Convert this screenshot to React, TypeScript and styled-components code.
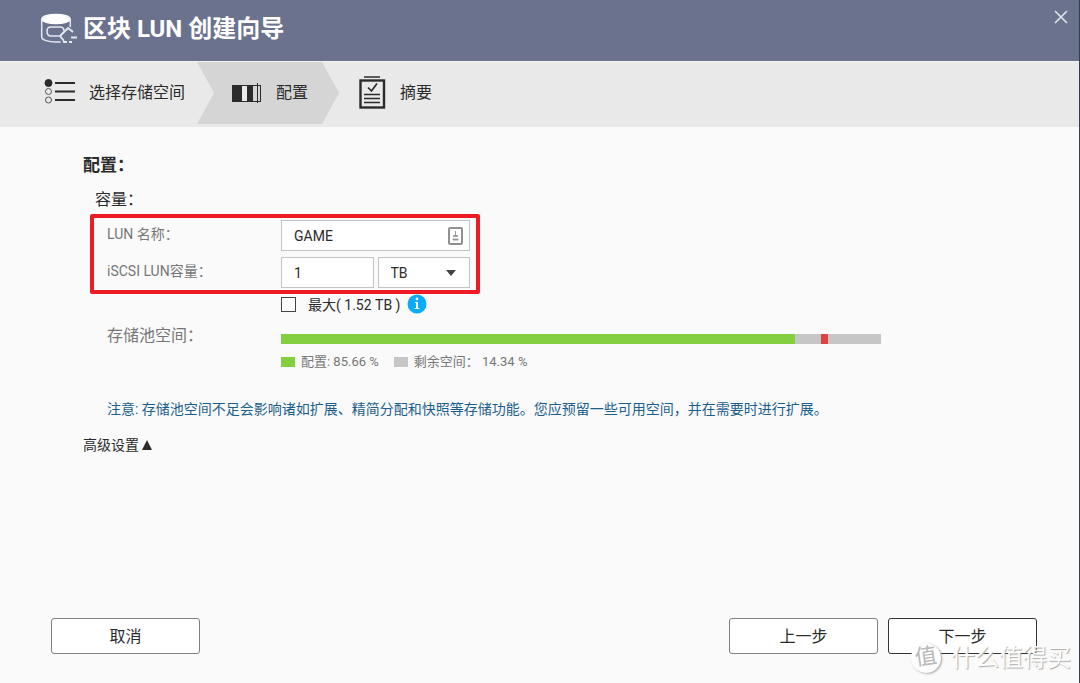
import React, { useState } from 'react';
import styled, { createGlobalStyle } from 'styled-components';

const GlobalStyle = createGlobalStyle`
  *, *::before, *::after { box-sizing: border-box; }
  body {
    margin: 0;
    background: #fafafa;
    color: #2b2b2b;
    font-family: Roboto, "Noto Sans CJK SC", sans-serif;
    font-size: 14px;
  }
  button, input, select { font: inherit; color: inherit; }
`;

const Wizard = styled.div`
  position: relative;
  display: flex;
  flex-direction: column;
  min-height: 100vh;
  border-right: 1px solid #33414f;
`;

const Header = styled.header`
  display: flex;
  align-items: flex-start;
  height: 62px;
  padding: 8px 9px 0 36px;
  background: #6b728e;
  border-bottom: 1px solid #f4f4f6;
  color: #fff;
`;

const Title = styled.h1`
  flex: 1;
  margin: 0;
  font-size: 24px;
  line-height: 42px;
  font-weight: 700;
`;

const CloseButton = styled.button`
  display: flex;
  padding: 2px;
  border: 0;
  background: none;
  cursor: pointer;
`;

const Steps = styled.ol`
  display: flex;
  margin: 0;
  padding: 0 0 3px;
  list-style: none;
  background: #e9e9e9;
`;

const Step = styled.li<{ $active?: boolean }>`
  display: flex;
  align-items: center;
  gap: 14px;
  height: 62px;
  padding: ${p => (p.$active ? '0 31px 0 35px' : '0 12px 0 20px')};
  font-size: 16px;
  line-height: 24px;
  ${p => p.$active && `
    background: #d5d5d5;
    clip-path: polygon(0 0, calc(100% - 17px) 0, 100% 50%, calc(100% - 17px) 100%, 0 100%, 17px 50%);
  `}
  &:first-child { padding-left: 44px; }
`;

const Content = styled.main`
  flex: 1;
  padding: 25px 83px;
`;

const Heading = styled.h2`
  margin: 0;
  font-size: 17px;
  line-height: 26px;
  font-weight: 700;
`;

const SubHeading = styled.h3`
  margin: 10px 0 0 12px;
  font-size: 16px;
  line-height: 24px;
  font-weight: 400;
`;

const Fields = styled.div`
  position: relative;
  display: grid;
  gap: 6px;
  width: 390px;
  margin: 2px 0 0 7px;
  padding: 6px 10px 6px 17px;
  &::after {
    content: '';
    position: absolute;
    inset: 0;
    border: 4px solid #ed1c24;
    border-radius: 2px;
    pointer-events: none;
  }
`;

const Row = styled.div`
  display: grid;
  grid-template-columns: 174px 1fr;
  align-items: start;
`;

const Label = styled.label`
  color: #777;
  line-height: 28px;
`;

const Controls = styled.div`
  display: flex;
  gap: 4px;
`;

const Box = styled.div`
  position: relative;
  flex: 1;
  min-width: 0;
  svg { position: absolute; pointer-events: none; }
`;

const TextInput = styled.input`
  display: block;
  width: 100%;
  height: 31px;
  padding: 0 12px;
  border: 1px solid #c4c4c4;
  border-radius: 0;
  background: #fff;
  outline: 0;
`;

const Select = styled.select`
  display: block;
  width: 100%;
  height: 31px;
  padding: 0 12px;
  border: 1px solid #c4c4c4;
  border-radius: 0;
  background: #fff;
  appearance: none;
  outline: 0;
`;

const CardIcon = styled.svg`
  top: 7px;
  right: 7px;
`;

const CaretIcon = styled.svg`
  top: 13px;
  right: 14px;
`;

const MaxRow = styled.div`
  display: flex;
  align-items: center;
  gap: 7px;
  height: 20px;
  margin-left: 198px;
`;

const CheckLabel = styled.label`
  display: flex;
  align-items: center;
  gap: 12px;
`;

const Checkbox = styled.input`
  width: 15px;
  height: 15px;
  margin: 0;
  border: 1px solid #444;
  background: #fff;
  appearance: none;
  &:checked { background: #444; box-shadow: inset 0 0 0 2px #fff; }
`;

const InfoButton = styled.button`
  display: flex;
  padding: 0;
  border: 0;
  background: none;
`;

const Pool = styled.div`
  display: grid;
  grid-template-columns: 174px minmax(0, 600px);
  margin: 10px 0 0 24px;
  color: #777;
`;

const PoolLabel = styled.div`
  font-size: 16px;
  line-height: 24px;
`;

const Bar = styled.div`
  position: relative;
  height: 10px;
  margin-top: 10px;
  background: #c6c6c6;
`;

const Used = styled.div`
  height: 100%;
  background: #83cf3f;
`;

const Threshold = styled.span`
  position: absolute;
  top: 0;
  left: 90%;
  width: 7px;
  height: 100%;
  background: #dc4444;
`;

const Legend = styled.div`
  display: flex;
  gap: 15px;
  margin-top: 8px;
  font-size: 13px;
  line-height: 20px;
`;

const LegendItem = styled.span<{ $color: string }>`
  display: flex;
  align-items: center;
  gap: 6px;
  white-space: pre;
  &::before {
    content: '';
    width: 14px;
    height: 10px;
    background: ${p => p.$color};
  }
`;

const Notice = styled.p`
  margin: 25px 0 0 24px;
  color: #1b5e8c;
  line-height: 24px;
`;

const AdvancedButton = styled.button`
  display: flex;
  align-items: center;
  gap: 2px;
  margin-top: 12px;
  padding: 0;
  border: 0;
  background: none;
  line-height: 24px;
`;

const Footer = styled.footer`
  display: flex;
  gap: 10px;
  padding: 0 42px 29px 51px;
`;

const Button = styled.button<{ $primary?: boolean }>`
  width: 149px;
  height: 36px;
  padding: 0 0 2px;
  border: 1px solid ${p => (p.$primary ? '#333' : '#808080')};
  border-radius: 3px;
  background: #fff;
  font-size: 16px;
  &:first-child { margin-right: auto; }
`;

const Watermark = styled.div`
  position: absolute;
  right: 8px;
  bottom: 9px;
  display: flex;
  align-items: center;
  gap: 10px;
  color: #fdfdfd;
  font-size: 24px;
  line-height: 32px;
  text-shadow: 1px 1px 1px #aaa;
  pointer-events: none;
`;

const WatermarkBadge = styled.span`
  width: 30px;
  height: 30px;
  border-radius: 50%;
  background: #fdfdfd;
  box-shadow: 1px 1px 2px #aaa;
  color: #b8b8b8;
  font-size: 22px;
  line-height: 28px;
  text-align: center;
  text-shadow: none;
  transform: rotate(-8deg);
`;

const LunIcon = () => (
  <svg width="47" height="36" viewBox="0 0 47 36" fill="none" stroke="#e6e8ef" strokeWidth="1.5" aria-hidden="true">
    <ellipse cx="20" cy="11" rx="14" ry="4.5" fill="#fff" stroke="#fff" />
    <path d="M5.700 11v18c0 3 7 5 14 5h5M34.300 11v8" />
    <path d="M24 28h-9c-3 0-4-2-4-5s1-4 4-4h9c2 0 4 1 4 4" />
    <path d="M24 28l8-8 5 4M24 28l4 5M35 29.500h6M27 34h4M33 34h3" strokeWidth="2" />
  </svg>
);

const ListIcon = () => (
  <svg width="31" height="28" viewBox="0 0 31 28" fill="none" stroke="#2b2b2b" aria-hidden="true">
    <circle cx="4.500" cy="4" r="3.500" fill="#2b2b2b" />
    <circle cx="4.500" cy="12.500" r="3" stroke="#555" />
    <circle cx="4.500" cy="21" r="3" stroke="#555" />
    <path d="M11 4h20M11 12.500h20M11 21h20" strokeWidth="2" />
  </svg>
);

const PartitionIcon = () => (
  <svg width="30" height="22" viewBox="0 0 30 22" fill="none" stroke="#2b2b2b" aria-hidden="true">
    <rect x=".5" y="3.500" width="28" height="16" />
    <path d="M0 3h10v17H0zM15 3h6v17h-6z" fill="#2b2b2b" stroke="none" />
    <path d="M10 4h5v15h-5z" fill="#e9e9e9" stroke="none" />
    <path d="M25.500 1v20" />
  </svg>
);

const SummaryIcon = () => (
  <svg width="27" height="34" viewBox="0 0 27 34" fill="none" stroke="#2b2b2b" aria-hidden="true">
    <path d="M5 1h16" strokeWidth="1.500" />
    <rect x="1.500" y="4.500" width="23.500" height="27" strokeWidth="2.400" />
    <path d="M9 11.500l3.500 3.500 5.500-7.500" strokeWidth="1.700" />
    <path d="M5 18.500h16M5 22.500h16M5 26.500h16" strokeWidth="1.300" />
  </svg>
);

export default function App() {
  const [name, setName] = useState('GAME');
  const [size, setSize] = useState('1');
  const used = 85.66;
  return (
    <Wizard>
      <GlobalStyle />
      <Header>
        <LunIcon />
        <Title>区块 LUN 创建向导</Title>
        <CloseButton aria-label="关闭">
          <svg width="14" height="14" viewBox="0 0 14 14" stroke="#e3e5ec" strokeWidth="1.600" aria-hidden="true">
            <path d="M1 1l12 12M13 1L1 13" />
          </svg>
        </CloseButton>
      </Header>
      <Steps>
        <Step><ListIcon />选择存储空间</Step>
        <Step $active aria-current="step"><PartitionIcon />配置</Step>
        <Step><SummaryIcon />摘要</Step>
      </Steps>
      <Content>
        <Heading>配置：</Heading>
        <SubHeading>容量：</SubHeading>
        <Fields>
          <Row>
            <Label htmlFor="lun-name">LUN 名称：</Label>
            <Box>
              <TextInput id="lun-name" value={name} onChange={e => setName(e.target.value)} />
              <CardIcon width="15" height="18" viewBox="0 0 15 18" aria-hidden="true">
                <rect x="1" y="1" width="13" height="16" rx="1" fill="#fff" stroke="#909090" strokeWidth="2" />
                <path d="M7.500 4v4M5.500 8.500h4v1h-4zM5 12h5v1H5z" fill="#999" stroke="#999" />
              </CardIcon>
            </Box>
          </Row>
          <Row>
            <Label htmlFor="lun-size">iSCSI LUN容量：</Label>
            <Controls>
              <Box>
                <TextInput id="lun-size" value={size} onChange={e => setSize(e.target.value)} />
              </Box>
              <Box>
                <Select aria-label="单位" defaultValue="TB">
                  <option>TB</option>
                  <option>GB</option>
                </Select>
                <CaretIcon width="10" height="6" viewBox="0 0 10 6" aria-hidden="true">
                  <path d="M0 0h10L5 6z" fill="#444" />
                </CaretIcon>
              </Box>
            </Controls>
          </Row>
        </Fields>
        <MaxRow>
          <CheckLabel><Checkbox type="checkbox" />最大( 1.52 TB )</CheckLabel>
          <InfoButton aria-label="信息">
            <svg width="20" height="20" viewBox="0 0 20 20" aria-hidden="true">
              <circle cx="10" cy="10" r="9.500" fill="#0aabf8" />
              <path d="M8 8h3v6h1.500v1h-5v-1H9V9H8z" fill="#fff" />
              <circle cx="10" cy="5" r="1.400" fill="#fff" />
            </svg>
          </InfoButton>
        </MaxRow>
        <Pool>
          <PoolLabel>存储池空间：</PoolLabel>
          <div>
            <Bar>
              <Used style={{ width: `${used}%` }} />
              <Threshold />
            </Bar>
            <Legend>
              <LegendItem $color="#83cf3f">配置: 85.66 %</LegendItem>
              <LegendItem $color="#c6c6c6">剩余空间： 14.34 %</LegendItem>
            </Legend>
          </div>
        </Pool>
        <Notice>注意: 存储池空间不足会影响诸如扩展、精简分配和快照等存储功能。您应预留一些可用空间，并在需要时进行扩展。</Notice>
        <AdvancedButton>
          高级设置
          <svg width="12" height="10" viewBox="0 0 12 10" aria-hidden="true"><path d="M6 0l5 10H1z" fill="#2b2b2b" /></svg>
        </AdvancedButton>
      </Content>
      <Footer>
        <Button>取消</Button>
        <Button>上一步</Button>
        <Button $primary>下一步</Button>
      </Footer>
      <Watermark aria-hidden="true">
        <WatermarkBadge>值</WatermarkBadge>
        什么值得买
      </Watermark>
    </Wizard>
  );
}
